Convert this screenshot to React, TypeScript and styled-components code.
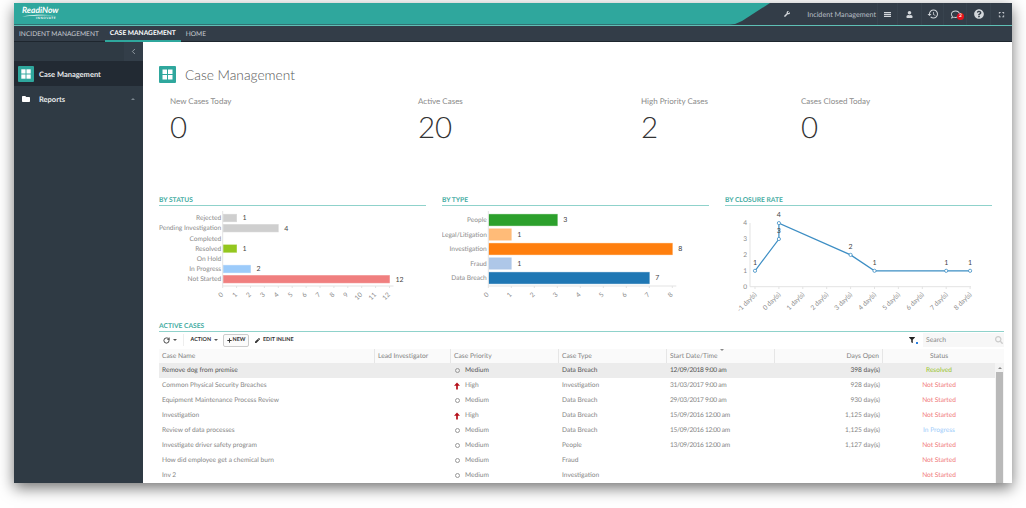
import { FaWrench, FaUser, FaQuestionCircle, FaFolder, FaFilter, FaPen, FaPlus, FaSearch, FaRegComment } from 'react-icons/fa';
import { MdHistory, MdFullscreen } from 'react-icons/md';
import { LuChevronLeft, LuRotateCw } from 'react-icons/lu';
import styled, { createGlobalStyle } from 'styled-components';

const GlobalStyle = createGlobalStyle`
  html, body {
    margin: 0;
    background: #fff;
    font-family: Lato, "Open Sans", "Liberation Sans", sans-serif;
    text-rendering: geometricPrecision;
  }
`;

const kpis = [
  { label: 'New Cases Today', value: '0' },
  { label: 'Active Cases', value: '20' },
  { label: 'High Priority Cases', value: '2' },
  { label: 'Cases Closed Today', value: '0' },
];

const statusBars = [
  { label: 'Rejected', value: 1, color: '#cfcfcf' },
  { label: 'Pending Investigation', value: 4, color: '#cfcfcf' },
  { label: 'Completed', value: 0, color: '#cfcfcf' },
  { label: 'Resolved', value: 1, color: '#94c720' },
  { label: 'On Hold', value: 0, color: '#cfcfcf' },
  { label: 'In Progress', value: 2, color: '#9ccbfa' },
  { label: 'Not Started', value: 12, color: '#f07f7f' },
];

const typeBars = [
  { label: 'People', value: 3, color: '#2ca02c' },
  { label: 'Legal/Litigation', value: 1, color: '#ffbb78' },
  { label: 'Investigation', value: 8, color: '#ff7f0e' },
  { label: 'Fraud', value: 1, color: '#aec7e8' },
  { label: 'Data Breach', value: 7, color: '#1f77b4' },
];

const closure = [
  { day: -1, value: 1 },
  { day: 0, value: 3 },
  { day: 0, value: 4 },
  { day: 3, value: 2 },
  { day: 4, value: 1 },
  { day: 7, value: 1 },
  { day: 8, value: 1 },
];

const cases = [
  { name: 'Remove dog from premise', priority: 'Medium', type: 'Data Breach', date: '12/09/2018 9:00 am', days: '398 day(s)', status: 'Resolved' },
  { name: 'Common Physical Security Breaches', priority: 'High', type: 'Investigation', date: '31/03/2017 9:00 am', days: '928 day(s)', status: 'Not Started' },
  { name: 'Equipment Maintenance Process Review', priority: 'Medium', type: 'Data Breach', date: '29/03/2017 9:00 am', days: '930 day(s)', status: 'Not Started' },
  { name: 'Investigation', priority: 'High', type: 'Data Breach', date: '15/09/2016 12:00 am', days: '1,125 day(s)', status: 'Not Started' },
  { name: 'Review of data processes', priority: 'Medium', type: 'Data Breach', date: '15/09/2016 12:00 am', days: '1,125 day(s)', status: 'In Progress' },
  { name: 'Investigate driver safety program', priority: 'Medium', type: 'People', date: '13/09/2016 12:00 am', days: '1,127 day(s)', status: 'Not Started' },
  { name: 'How did employee get a chemical burn', priority: 'Medium', type: 'Fraud', date: '', days: '', status: 'Not Started' },
  { name: 'Inv 2', priority: 'Medium', type: 'Investigation', date: '', days: '', status: 'Not Started' },
];

const statusColors: Record<string, string> = {
  Resolved: '#9ac52c',
  'Not Started': '#f07a7a',
  'In Progress': '#9ccbfa',
};

function GridIcon({ size }: { size: number }) {
  return (
    <svg width={size} height={size} viewBox='0 0 17 17'>
      <rect width='17' height='17' rx='1' fill='#2fa79d' />
      <rect x='3.5' y='3.5' width='4.5' height='4.5' fill='#fff' />
      <rect x='9' y='3.5' width='4.5' height='4.5' fill='#fff' />
      <rect x='3.5' y='9' width='4.5' height='4.5' fill='#fff' />
      <rect x='9' y='9' width='4.5' height='4.5' fill='#fff' />
    </svg>
  );
}

function HighArrow() {
  return (
    <svg width='7' height='8' viewBox='0 0 7 8'>
      <path d='M3.5 0L7 3.6H4.5V8H2.5V3.6H0Z' fill='#b5101a' />
    </svg>
  );
}

function HamburgerBars() {
  return (
    <svg width='7' height='5' viewBox='0 0 7 5'>
      <rect width='7' height='1.2' fill='currentColor' />
      <rect y='1.9' width='7' height='1.2' fill='currentColor' />
      <rect y='3.8' width='7' height='1.2' fill='currentColor' />
    </svg>
  );
}

type BarChartProps = {
  bars: { label: string; value: number; color: string }[];
  axisX: number;
  unit: number;
  max: number;
  barHeight: number;
  pitch: number;
};

function BarChart({ bars, axisX, unit, max, barHeight, pitch }: BarChartProps) {
  const axisY = 77;
  const top = 5.3;
  const ticks = Array.from({ length: max + 1 }, (_, i) => i);
  return (
    <ChartSvg viewBox='0 0 267 105'>
      {bars.map((bar, i) => {
        const y = top + i * pitch;
        return (
          <g key={bar.label}>
            <AxisLabel x={axisX - 1.5} y={y + barHeight / 2 + 2.2} textAnchor='end'>
              {bar.label}
            </AxisLabel>
            {bar.value > 0 && (
              <>
                <rect
                  x={axisX + 0.5}
                  y={y}
                  width={bar.value * unit - 0.5}
                  height={barHeight}
                  fill={bar.color}
                  stroke={bar.color}
                  strokeOpacity='0.6'
                  strokeWidth='0.8'
                />
                <ValueLabel x={axisX + bar.value * unit + 6} y={y + barHeight / 2 + 2.4}>
                  {bar.value}
                </ValueLabel>
              </>
            )}
          </g>
        );
      })}
      <AxisLine x1={axisX} y1={2} x2={axisX} y2={axisY} />
      <AxisLine x1={axisX} y1={axisY} x2={axisX + max * unit + 4} y2={axisY} />
      {ticks.map((t) => {
        const x = axisX + t * unit;
        return (
          <g key={t}>
            <AxisLine x1={x} y1={axisY} x2={x} y2={axisY + 2} />
            <AxisLabel x={x + 1} y={axisY + 9} textAnchor='end' transform={`rotate(-45 ${x + 1} ${axisY + 9})`}>
              {t}
            </AxisLabel>
          </g>
        );
      })}
    </ChartSvg>
  );
}

function LineChart() {
  const sx = (d: number) => 30 + (d + 1) * 23.9;
  const sy = (v: number) => 77.7 - v * 15.9;
  const points = closure.map((p) => `${sx(p.day)},${sy(p.value)}`).join(' ');
  return (
    <ChartSvg viewBox='0 0 267 105'>
      <AxisLine x1={25} y1={14} x2={25} y2={77.7} />
      <AxisLine x1={25} y1={77.7} x2={246} y2={77.7} />
      {[0, 1, 2, 3, 4].map((v) => (
        <AxisLabel key={v} x={22} y={sy(v) + 2.2} textAnchor='end'>
          {v}
        </AxisLabel>
      ))}
      {Array.from({ length: 10 }, (_, i) => i - 1).map((d) => (
        <g key={d}>
          <AxisLine x1={sx(d)} y1={77.7} x2={sx(d)} y2={80} />
          <AxisLabel x={sx(d) + 2} y={86} textAnchor='end' transform={`rotate(-45 ${sx(d) + 2} 86)`}>
            {`${d} day(s)`}
          </AxisLabel>
        </g>
      ))}
      <polyline points={points} fill='none' stroke='#3d8ec4' strokeWidth='1.2' />
      {closure.map((p, i) => (
        <g key={i}>
          <circle cx={sx(p.day)} cy={sy(p.value)} r='1.6' fill='#fff' stroke='#3d8ec4' strokeWidth='0.8' />
          <ValueLabel x={sx(p.day)} y={sy(p.value) - 6} textAnchor='middle'>
            {p.value}
          </ValueLabel>
        </g>
      ))}
    </ChartSvg>
  );
}

export default function App() {
  return (
    <>
      <GlobalStyle />
      <Stage>
        <Frame>
          <TopBar>
            <Brand>
              <Logo>
                <LogoName>ReadiNow</LogoName>
                <svg width='34' height='3' viewBox='0 0 34 3'>
                  <path d='M0 2.6 C10 0.2 22 0.4 34 1.2 C22 1.2 10 1.4 0 2.6Z' fill='#fff' />
                </svg>
                <LogoTag>INNOVATE</LogoTag>
              </Logo>
            </Brand>
            <TopTools>
              <ToolIcon $width={20}>
                <FaWrench size={6} />
              </ToolIcon>
              <AppName>Incident Management</AppName>
              <ToolIcon $width={20} $line>
                <HamburgerBars />
              </ToolIcon>
              <ToolIcon $width={24} $line>
                <FaUser size={7} />
              </ToolIcon>
              <ToolIcon $width={22} $line>
                <MdHistory size={12} />
              </ToolIcon>
              <ToolIcon $width={23} $line>
                <FaRegComment size={9} />
                <Badge>2</Badge>
              </ToolIcon>
              <ToolIcon $width={24} $line>
                <FaQuestionCircle size={10} />
              </ToolIcon>
              <ToolIcon $width={22} $line>
                <MdFullscreen size={9} />
              </ToolIcon>
            </TopTools>
          </TopBar>

          <NavBar>
            <NavTab>INCIDENT MANAGEMENT</NavTab>
            <NavTab $active>CASE MANAGEMENT</NavTab>
            <NavTab>HOME</NavTab>
          </NavBar>

          <Body>
            <Sidebar>
              <CollapseRow>
                <CollapseButton>
                  <LuChevronLeft size={9} />
                </CollapseButton>
              </CollapseRow>
              <SideItem $active>
                <SideIcon>
                  <GridIcon size={16} />
                </SideIcon>
                Case Management
              </SideItem>
              <SideItem>
                <SideIcon $inset={4}>
                  <FaFolder size={8} />
                </SideIcon>
                Reports
                <SideCaret />
              </SideItem>
            </Sidebar>

            <Main>
              <PageHead>
                <GridIcon size={17} />
                <PageTitle>Case Management</PageTitle>
              </PageHead>

              <KpiRow>
                {kpis.map((kpi) => (
                  <Kpi key={kpi.label}>
                    <KpiLabel>{kpi.label}</KpiLabel>
                    <KpiValue>{kpi.value}</KpiValue>
                  </Kpi>
                ))}
              </KpiRow>

              <ChartRow>
                <section>
                  <SectionTitle>BY STATUS</SectionTitle>
                  <BarChart bars={statusBars} axisX={63.7} unit={13.9} max={12} barHeight={7.4} pitch={10.2} />
                </section>
                <section>
                  <SectionTitle>BY TYPE</SectionTitle>
                  <BarChart bars={typeBars} axisX={46.3} unit={23} max={8} barHeight={11.4} pitch={14.5} />
                </section>
                <section>
                  <SectionTitle>BY CLOSURE RATE</SectionTitle>
                  <LineChart />
                </section>
              </ChartRow>

              <CasesSection>
                <SectionTitle>ACTIVE CASES</SectionTitle>
                <Toolbar>
                  <ToolGroup>
                    <ToolButton>
                      <LuRotateCw size={7} strokeWidth={3} />
                      <Caret />
                    </ToolButton>
                    <ToolDivider />
                    <ToolButton>
                      ACTION
                      <Caret />
                    </ToolButton>
                    <NewButton>
                      <FaPlus size={5} />
                      NEW
                    </NewButton>
                    <ToolButton>
                      <FaPen size={5} />
                      EDIT INLINE
                    </ToolButton>
                  </ToolGroup>
                  <ToolGroup>
                    <FilterMark>
                      <FaFilter size={6} />
                      <FilterDot />
                    </FilterMark>
                    <SearchBox>
                      Search
                      <FaSearch size={8} color='#ccc' />
                    </SearchBox>
                  </ToolGroup>
                </Toolbar>
                <HeaderRow>
                  <HeaderCell>Case Name</HeaderCell>
                  <HeaderCell>Lead Investigator</HeaderCell>
                  <HeaderCell>Case Priority</HeaderCell>
                  <HeaderCell>Case Type</HeaderCell>
                  <HeaderCell>
                    Start Date/Time
                    <SortMark />
                  </HeaderCell>
                  <HeaderCell $align='right'>Days Open</HeaderCell>
                  <HeaderCell $align='center'>Status</HeaderCell>
                </HeaderRow>
                <TableBody>
                  <div>
                    {cases.map((row, i) => (
                      <Row key={row.name} $selected={i === 0}>
                        <Cell>{row.name}</Cell>
                        <Cell />
                        <PriorityCell>
                          <PriorityMark>{row.priority === 'High' ? <HighArrow /> : <MediumDot />}</PriorityMark>
                          {row.priority}
                        </PriorityCell>
                        <Cell>{row.type}</Cell>
                        <DateCell>{row.date}</DateCell>
                        <Cell $align='right'>{row.days}</Cell>
                        <StatusCell $color={statusColors[row.status]}>{row.status}</StatusCell>
                      </Row>
                    ))}
                  </div>
                  <ScrollTrack>
                    <ScrollArrow />
                    <ScrollThumb />
                  </ScrollTrack>
                </TableBody>
              </CasesSection>
            </Main>
          </Body>
        </Frame>
      </Stage>
    </>
  );
}

const Stage = styled.div`
  width: 1026px;
  height: 508px;
  padding: 3px 14px 0;
  box-sizing: border-box;
  overflow: hidden;
`;

const Frame = styled.div`
  width: 998px;
  height: 480px;
  display: flex;
  flex-direction: column;
  overflow: hidden;
  background: #fff;
  box-shadow: 0 5px 14px rgba(0, 0, 0, 0.55);
`;

const TopBar = styled.header`
  height: 22px;
  flex: none;
  display: flex;
  justify-content: space-between;
  background: #333d48;
`;

const Brand = styled.div`
  width: 756px;
  clip-path: path('M0 0H756L728 18Q722 21.5 716 21.5H0Z');
  background: #2fa79d;
  padding: 2px 0 0 8px;
  box-sizing: border-box;
`;

const Logo = styled.div`
  display: flex;
  flex-direction: column;
  align-items: flex-start;
  width: 40px;
  color: #fff;
  svg {
    display: block;
    margin-top: -1px;
  }
`;

const LogoName = styled.span`
  font-size: 8.5px;
  line-height: 10px;
  font-weight: 700;
  font-style: italic;
`;

const LogoTag = styled.span`
  font-size: 3px;
  line-height: 3px;
  letter-spacing: 0.6px;
  margin-left: 14px;
  font-weight: 700;
`;

const TopTools = styled.div`
  display: flex;
  align-items: center;
  color: #d3d7db;
`;

const ToolIcon = styled.div<{ $width: number; $line?: boolean }>`
  position: relative;
  width: ${(p) => p.$width}px;
  height: 100%;
  display: flex;
  align-items: center;
  justify-content: center;
  border-left: ${(p) => (p.$line ? '1px solid #38434e' : 'none')};
  box-sizing: border-box;
`;

const AppName = styled.span`
  font-size: 7.2px;
  color: #b9bfc5;
  margin: 0 1px 0 10px;
  white-space: nowrap;
`;

const Badge = styled.span`
  position: absolute;
  left: 13px;
  top: 10px;
  width: 7px;
  height: 7px;
  border-radius: 50%;
  background: #e8121c;
  color: #fff;
  font-size: 5px;
  line-height: 7px;
  font-weight: 700;
  text-align: center;
`;

const NavBar = styled.nav`
  height: 17px;
  flex: none;
  display: flex;
  background: #333d48;
  border-top: 1px solid #5fc0b6;
  border-bottom: 1px solid #1e262e;
  box-sizing: border-box;
`;

const NavTab = styled.div<{ $active?: boolean }>`
  height: 16px;
  padding: 0 5px;
  display: flex;
  align-items: center;
  font-size: 6.6px;
  color: ${(p) => (p.$active ? '#fff' : '#c8ced3')};
  font-weight: ${(p) => (p.$active ? 700 : 400)};
  border-bottom: ${(p) => (p.$active ? '2px solid #2fa79d' : 'none')};
  box-sizing: border-box;
  white-space: nowrap;
  &:first-child {
    margin-right: 1px;
  }
`;

const Body = styled.div`
  flex: 1;
  min-height: 0;
  display: flex;
`;

const Sidebar = styled.aside`
  width: 129px;
  flex: none;
  background: #2f3a44;
`;

const CollapseRow = styled.div`
  height: 19px;
  display: flex;
  justify-content: flex-end;
`;

const CollapseButton = styled.div`
  width: 19px;
  display: flex;
  align-items: center;
  justify-content: center;
  color: #aeb5bb;
  background: #333e49;
`;

const SideItem = styled.div<{ $active?: boolean }>`
  height: 25px;
  box-sizing: border-box;
  display: flex;
  align-items: center;
  padding: 1px 5px 0 4px;
  font-size: 7.5px;
  font-weight: 700;
  color: #e6e9eb;
  background: ${(p) => (p.$active ? '#222a33' : 'transparent')};
`;

const SideIcon = styled.span<{ $inset?: number }>`
  width: 21px;
  padding-left: ${(p) => p.$inset || 0}px;
  box-sizing: border-box;
  display: flex;
  color: #fff;
`;

const SideCaret = styled.span`
  margin-left: auto;
  margin-right: 3px;
  border-left: 2px solid transparent;
  border-right: 2px solid transparent;
  border-bottom: 2px solid #7b858e;
`;

const Main = styled.main`
  flex: 1;
  min-width: 0;
  padding: 24px 8px 0 16px;
  display: flex;
  flex-direction: column;
`;

const PageHead = styled.div`
  height: 17px;
  flex: none;
  display: flex;
  align-items: center;
  gap: 9px;
`;

const PageTitle = styled.h1`
  margin: 0;
  font-size: 13.7px;
  line-height: 17px;
  font-weight: 300;
  color: #555;
`;

const KpiRow = styled.div`
  display: grid;
  grid-template-columns: 248px 223px 160px 1fr;
  padding: 13px 0 0 11px;
  height: 55px;
  flex: none;
`;

const Kpi = styled.div`
  display: flex;
  flex-direction: column;
`;

const KpiLabel = styled.span`
  font-size: 8px;
  line-height: 11px;
  color: #8a8a8a;
`;

const KpiValue = styled.span`
  margin-top: 2px;
  font-size: 29.5px;
  line-height: 38px;
  font-weight: 300;
  color: #333;
`;

const ChartRow = styled.div`
  margin-top: 45px;
  display: grid;
  grid-template-columns: repeat(3, 267px);
  column-gap: 16px;
  height: 126px;
  flex: none;
`;

const SectionTitle = styled.h2`
  margin: 0;
  height: 9px;
  font-size: 6.7px;
  line-height: 9px;
  font-weight: 700;
  color: #45aca2;
  border-bottom: 1px solid #8fd2cb;
`;

const ChartSvg = styled.svg`
  display: block;
  width: 267px;
  height: 105px;
  margin-top: 3px;
`;

const AxisLabel = styled.text`
  font-size: 6.6px;
  fill: #8a8a8a;
`;

const ValueLabel = styled.text`
  font-size: 7px;
  fill: #444;
`;

const AxisLine = styled.line`
  stroke: #e3e3e3;
  stroke-width: 1;
`;

const CasesSection = styled.section`
  flex: 1;
  min-height: 0;
`;

const Toolbar = styled.div`
  height: 16px;
  display: flex;
  align-items: center;
  justify-content: space-between;
`;

const ToolGroup = styled.div`
  display: flex;
  align-items: center;
`;

const ToolButton = styled.div`
  height: 13px;
  display: flex;
  align-items: center;
  gap: 2.5px;
  padding: 0 4px;
  font-size: 5.4px;
  font-weight: 700;
  color: #333;
`;

const NewButton = styled(ToolButton)`
  border: 1px solid #ccc;
  border-radius: 2px;
  box-sizing: border-box;
  background: #fbfbfb;
  gap: 1px;
  padding: 0 3px;
  margin: 0 2px 0 1px;
`;

const ToolDivider = styled.span`
  width: 1px;
  height: 12px;
  background: #eee;
  margin: 0 3px 0 2px;
`;

const Caret = styled.span`
  border-left: 2px solid transparent;
  border-right: 2px solid transparent;
  border-top: 2px solid #555;
`;

const FilterMark = styled.span`
  position: relative;
  width: 11px;
  margin-right: 3px;
  color: #222;
  display: flex;
`;

const FilterDot = styled.span`
  position: absolute;
  left: 7px;
  top: 5px;
  width: 2px;
  height: 2px;
  background: #2a7fe0;
`;

const SearchBox = styled.div`
  width: 81px;
  height: 14px;
  padding: 0 1px 0 3px;
  box-sizing: border-box;
  display: flex;
  align-items: center;
  justify-content: space-between;
  background: #f7f7f7;
  font-size: 6.8px;
  color: #888;
`;

const columns = '216px 76px 108px 108px 108px 108px 112px';

const HeaderRow = styled.div`
  display: grid;
  grid-template-columns: ${columns} 1fr;
  height: 14px;
  background: #fafafa;
  margin-top: 1px;
`;

const HeaderCell = styled.div<{ $align?: string }>`
  position: relative;
  padding: 0 3px;
  font-size: 6.7px;
  line-height: 14px;
  color: #808080;
  text-align: ${(p) => p.$align || 'left'};
  border-right: 1px solid #e6e6e6;
  box-sizing: border-box;
  white-space: nowrap;
  &:nth-child(7) {
    border-right: none;
  }
`;

const SortMark = styled.span`
  position: absolute;
  left: 53px;
  top: 0;
  border-left: 2.5px solid transparent;
  border-right: 2.5px solid transparent;
  border-top: 2.5px solid #888;
`;

const TableBody = styled.div`
  display: grid;
  grid-template-columns: 836px 9px;
`;

const Row = styled.div<{ $selected?: boolean }>`
  display: grid;
  grid-template-columns: ${columns};
  height: 15px;
  background: ${(p) => (p.$selected ? '#ececec' : '#fff')};
  color: ${(p) => (p.$selected ? '#555' : '#858585')};
`;

const Cell = styled.div<{ $align?: string }>`
  padding: 0 3px;
  font-size: 6.6px;
  line-height: 15px;
  text-align: ${(p) => p.$align || 'left'};
  white-space: nowrap;
  overflow: hidden;
`;

const DateCell = styled(Cell)`
  letter-spacing: -0.3px;
`;

const PriorityCell = styled(Cell)`
  display: flex;
  align-items: center;
`;

const PriorityMark = styled.span`
  width: 11px;
  padding-right: 5px;
  box-sizing: border-box;
  display: flex;
  align-items: center;
  justify-content: center;
`;

const MediumDot = styled.span`
  flex: none;
  width: 5px;
  height: 5px;
  border: 1px solid #999;
  border-radius: 50%;
  box-sizing: border-box;
`;

const StatusCell = styled(Cell)<{ $color: string }>`
  text-align: center;
  color: ${(p) => p.$color};
`;

const ScrollTrack = styled.div`
  background: #f4f4f4;
  display: flex;
  flex-direction: column;
  align-items: center;
`;

const ScrollArrow = styled.span`
  margin: 4px 0 3px;
  border-left: 2px solid transparent;
  border-right: 2px solid transparent;
  border-bottom: 2px solid #888;
`;

const ScrollThumb = styled.span`
  flex: 1;
  width: 7px;
  background: #b9b9b9;
`;
